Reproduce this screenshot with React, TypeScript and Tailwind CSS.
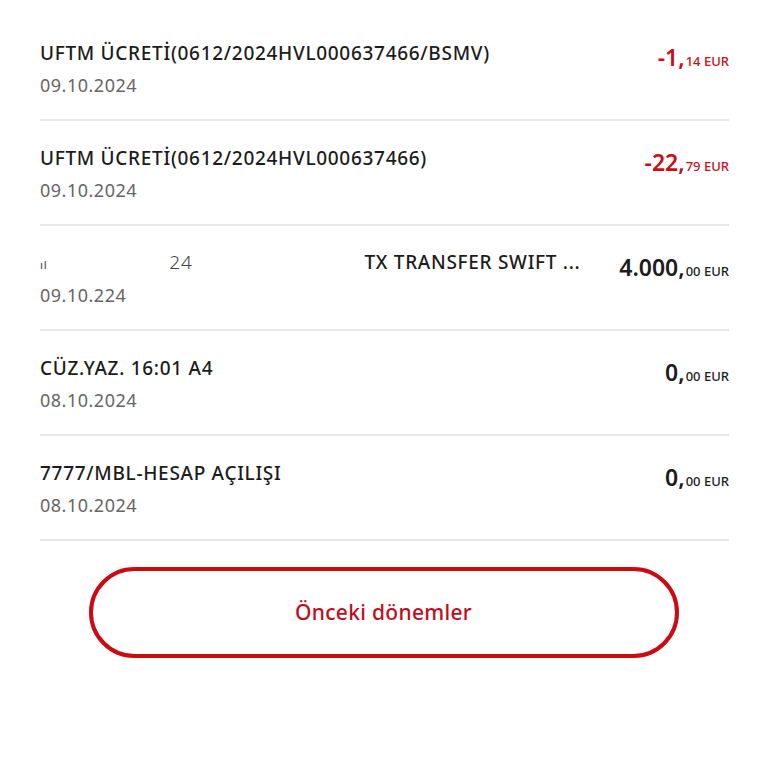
import * as React from 'react';

interface Tx {
  title: React.ReactNode;
  date: React.ReactNode;
  whole: string;
  cents: string;
  negative?: boolean;
}

const txs: Tx[] = [
  { title: 'UFTM ÜCRETİ(0612/2024HVL000637466/BSMV)', date: '09.10.2024', whole: '-1,', cents: '14', negative: true },
  { title: 'UFTM ÜCRETİ(0612/2024HVL000637466)', date: '09.10.2024', whole: '-22,', cents: '79', negative: true },
  {
    title: (
      <span className="flex items-baseline">
        <span className="text-[11px] text-[#555]">ıl</span>
        <span className="ml-[122px] font-light text-[#444]">24</span>
        <span className="ml-[172px]">TX TRANSFER SWIFT ...</span>
      </span>
    ),
    date: '09.10.224',
    whole: '4.000,',
    cents: '00',
  },
  { title: 'CÜZ.YAZ. 16:01 A4', date: '08.10.2024', whole: '0,', cents: '00' },
  { title: '7777/MBL-HESAP AÇILIŞI', date: '08.10.2024', whole: '0,', cents: '00' },
];

function Row({ tx }: { tx: Tx }) {
  const color = tx.negative ? 'text-[#c80f1a]' : 'text-[#1c1c1c]';
  return (
    <div className="border-b-2 border-[#e8e8e8] pt-[25px] pb-[22px]">
      <div className="flex h-6 items-center justify-between">
        <div className="text-[19px] leading-6 font-medium tracking-[0.7px] text-[#1c1c1c] whitespace-nowrap">{tx.title}</div>
        <div className={`flex items-baseline whitespace-nowrap ${color} translate-y-[5px]`}>
          <span className="text-[23px] font-semibold leading-6">{tx.whole}</span>
          <span className="text-[13px] font-medium ml-[1px]">{tx.cents} EUR</span>
        </div>
      </div>
      <div className="mt-2 text-[18px] leading-6 tracking-[0.5px] text-[#666]">{tx.date}</div>
    </div>
  );
}

export default function App() {
  return (
    <div className="w-[768px] h-[768px] bg-white pl-10 pr-[39px] pt-[16px]" style={{ fontFamily: '"Noto Sans", "Liberation Sans", sans-serif' }}>
      {txs.map((tx, i) => (
        <Row key={i} tx={tx} />
      ))}
      <div className="flex justify-center pt-[26px] pr-[2px]">
        <button
          type="button"
          className="w-[590px] h-[91px] rounded-full border-[4px] border-[#cc0a14] text-[#c00d1e] text-[21px] font-medium tracking-[0.3px] bg-white"
        >
          Önceki dönemler
        </button>
      </div>
    </div>
  );
}
